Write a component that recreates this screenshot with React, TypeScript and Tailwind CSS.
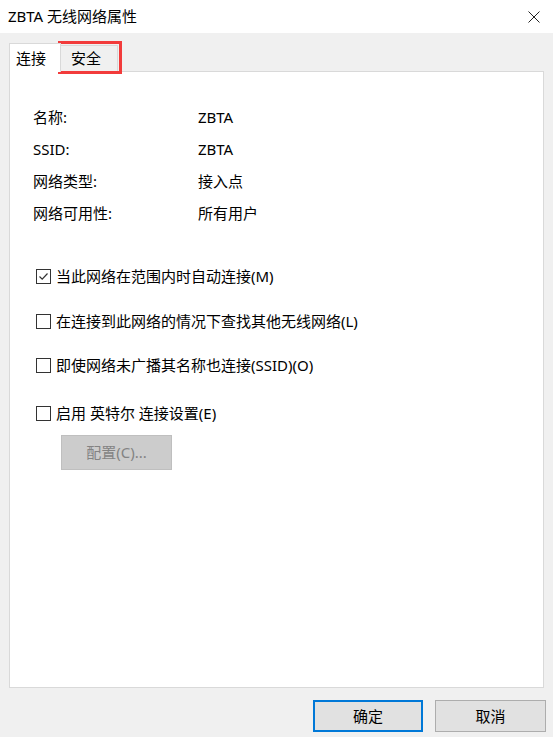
import React from "react";

const font = { fontFamily: '"Segoe UI", "Noto Sans", "Noto Sans CJK SC", sans-serif' };

function Check({ checked, label }: { checked?: boolean; label: string }) {
  return (
    <div className="flex items-center h-[24px] ml-[3px]">
      <div className="w-[15px] h-[15px] border border-[#333333] bg-white flex items-center justify-center">
        {checked && (
          <svg width="11" height="11" viewBox="0 0 11 11">
            <path d="M1.5 5.5 L4.2 8.2 L9.5 2.5" fill="none" stroke="#333" strokeWidth="1.2" />
          </svg>
        )}
      </div>
      <span className="ml-[5px] text-[15px] text-black">{label}</span>
    </div>
  );
}

export default function App() {
  return (
    <div className="w-[553px] h-[737px] bg-[#f0f0f0] flex flex-col relative" style={font}>
      <div className="h-[33px] bg-white flex items-center justify-between pl-[8px] pr-[13px] shrink-0">
        <span className="text-[15px] text-black leading-none">ZBTA 无线网络属性</span>
        <svg width="12" height="12" viewBox="0 0 12 12">
          <path d="M0.5 0.5 L11.5 11.5 M11.5 0.5 L0.5 11.5" stroke="#222" strokeWidth="1" />
        </svg>
      </div>
      <div className="flex flex-col flex-1 mx-[9px] mt-[10px]">
        <div className="flex items-end h-[28px] shrink-0">
          <div className="h-[29px] w-[52px] mb-[-1px] relative z-10 bg-white border border-b-0 border-[#d9d9d9] flex items-center pl-[6px] text-[15px] text-black">
            连接
          </div>
          <div className="h-[26px] w-[57px] bg-[#f0f0f0] border border-l-0 border-b-0 border-[#d9d9d9] flex items-center pl-[10px] text-[15px] text-black">
            安全
          </div>
        </div>
        <div className="flex-1 bg-white border border-[#d9d9d9] flex flex-col pl-[23px] pt-[29px]">
          {[
            ["名称:", "ZBTA"],
            ["SSID:", "ZBTA"],
            ["网络类型:", "接入点"],
            ["网络可用性:", "所有用户"],
          ].map(([k, v]) => (
            <div key={k} className="flex items-center h-[32px] text-[15px] text-black">
              <span className="w-[165px]">{k}</span>
              <span>{v}</span>
            </div>
          ))}
          <div className="mt-[35px]">
            <Check checked label="当此网络在范围内时自动连接(M)" />
          </div>
          <div className="mt-[21px]">
            <Check label="在连接到此网络的情况下查找其他无线网络(L)" />
          </div>
          <div className="mt-[20px]">
            <Check label="即使网络未广播其名称也连接(SSID)(O)" />
          </div>
          <div className="mt-[24px]">
            <Check label="启用 英特尔 连接设置(E)" />
          </div>
          <div className="mt-[10px] ml-[28px] w-[111px] h-[35px] bg-[#cccccc] border border-[#bfbfbf] flex items-center justify-center text-[15px] text-[#838383]">
            配置(C)...
          </div>
        </div>
      </div>
      <div className="flex justify-end gap-[12px] mt-[12px] mb-[5px] pr-[7px] shrink-0">
        <div className="w-[110px] h-[32px] bg-[#e1e1e1] border-2 border-[#0078d7] flex items-center justify-center text-[15px] text-black">
          确定
        </div>
        <div className="w-[111px] h-[32px] bg-[#e1e1e1] border border-[#adadad] flex items-center justify-center text-[15px] text-black">
          取消
        </div>
      </div>
      <div className="absolute left-[58px] top-[41px] w-[64px] h-[33px] border-[3px] border-[#f23b3b]" />
    </div>
  );
}
